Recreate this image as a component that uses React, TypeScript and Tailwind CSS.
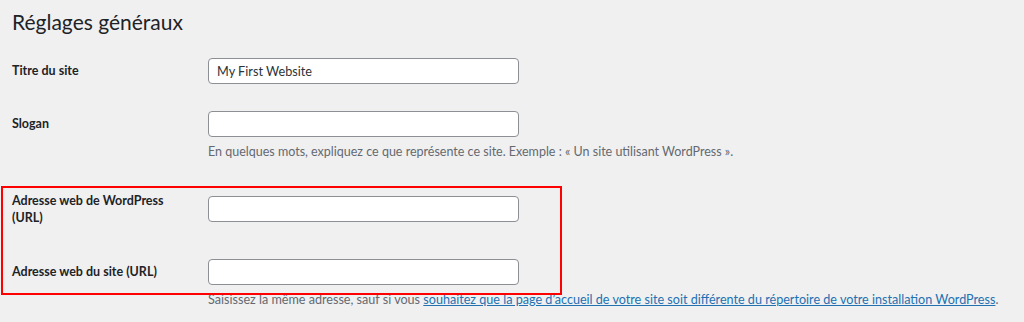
import React from "react";

function Field({ value = "" }: { value?: string }) {
  return (
    <input
      type="text"
      defaultValue={value}
      readOnly
      className="block h-[26px] w-[311px] rounded-[4px] border border-[#8c8f94] bg-white px-[8px] text-[12.7px] leading-[24px] text-[#2c3338] outline-none"
    />
  );
}

export default function App() {
  return (
    <div className="h-[322px] overflow-hidden bg-[#f0f0f1] pl-[12px] pt-[8px] font-[Lato,sans-serif] text-[#1d2327]">
      <h1 className="text-[21px] font-normal leading-[28px] text-[#1d2327]">Réglages généraux</h1>

      <div className="mt-[22px] flex items-start">
        <label className="w-[196px] shrink-0 pt-[4px] text-[12.5px] font-bold leading-[18px]">Titre du site</label>
        <Field value="My First Website" />
      </div>

      <div className="mt-[27px] flex items-start">
        <label className="w-[196px] shrink-0 pt-[4px] text-[12.5px] font-bold leading-[18px]">Slogan</label>
        <div>
          <Field />
          <p className="mt-[6px] text-[12.5px] leading-[18px] text-[#646970]">
            En quelques mots, expliquez ce que représente ce site. Exemple : « Un site utilisant WordPress ».
          </p>
        </div>
      </div>

      <div className="relative mt-[31px]">
        <div className="flex items-start">
          <label className="w-[196px] shrink-0 text-[12.5px] font-bold leading-[17px]">
            Adresse web de WordPress
            <br />
            (URL)
          </label>
          <div className="mt-[4px]">
            <Field />
          </div>
        </div>

        <div className="mt-[33px] flex items-start">
          <label className="w-[196px] shrink-0 pt-[4px] text-[12.5px] font-bold leading-[18px]">Adresse web du site (URL)</label>
          <div>
            <Field />
            <p className="mt-[6px] whitespace-nowrap text-[12.6px] leading-[18px] text-[#646970]">
              Saisissez la même adresse, sauf si vous{" "}
              <a href="#" className="text-[#2271b1] underline">
                souhaitez que la page d’accueil de votre site soit différente du répertoire de votre installation WordPress
              </a>
              .
            </p>
          </div>
        </div>

        <div className="pointer-events-none absolute left-[-11px] top-[-6px] z-10 h-[109px] w-[561px] border-2 border-[#ff0000]" />
      </div>
    </div>
  );
}
